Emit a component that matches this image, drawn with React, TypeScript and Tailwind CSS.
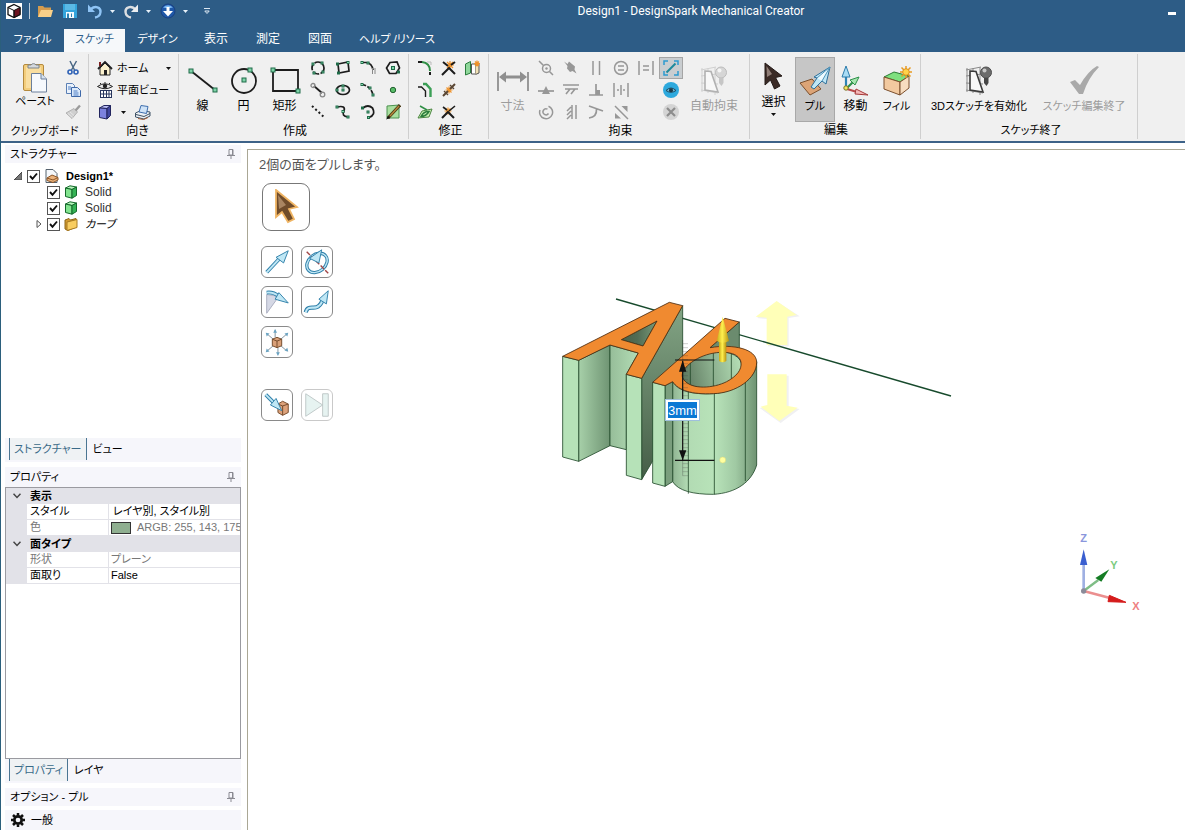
import React from "react";

type Kids = { children?: React.ReactNode };

const D = "#1c1c1c";

function Svg({ s = 16, vb, h, children }: Kids & { s?: number; vb?: string; h?: number }) {
  return (
    <svg aria-hidden="true" width={s} height={h ?? s} viewBox={vb ?? `0 0 ${s} ${h ?? s}`} fill="none" className="block shrink-0">
      {children}
    </svg>
  );
}

function Node({ x, y, r = 1.5 }: { x: number; y: number; r?: number }) {
  return <rect x={x - r} y={y - r} width={r * 2} height={r * 2} fill="#7fd3a8" stroke="#1f6b48" strokeWidth="1" />;
}

function Caret({ light = false }: { light?: boolean }) {
  return (
    <Svg s={5} h={3}>
      <path d="M0 0h5L2.500 3z" fill={light ? "#e8f2fa" : "#111"} />
    </Svg>
  );
}

/* ---------- title bar icons ---------- */
const AppLogo = () => (
  <Svg s={16}>
    <rect width="16" height="16" fill="#fff" />
    <path d="M8 1.500L14 4.500V11.500L8 14.500L2 11.500V4.500Z" fill="#fff" stroke="#111" strokeWidth="1.300" />
    <path d="M8 7.500L14 4.500V11.500L8 14.500Z" fill="#6d1320" stroke="#111" />
    <path d="M2 4.500L8 7.500V14.500" stroke="#111" />
  </Svg>
);
const OpenIcon = () => (
  <Svg s={16}>
    <path d="M1 14V3h5l1.500 1.500H14V14Z" fill="#d49b4e" />
    <path d="M1 14L4 7h12l-2 7Z" fill="#f9d089" />
  </Svg>
);
const SaveIcon = () => (
  <Svg s={16}>
    <path d="M1 1h14v14H1Z" fill="#34a4dc" />
    <path d="M3 1h10v6H3Z" fill="#5bb9e6" />
    <path d="M4 9h8v6H4Z" fill="#f4fbff" />
    <path d="M5 10.500h2V15H5ZM9 10.500h1V14H9Z" fill="#2c83b5" />
  </Svg>
);
const UndoIcon = () => (
  <Svg s={16}>
    <path d="M4 6C8 2.500 14 4 13.500 9C13.200 12 11 14 8 14.500" stroke="#8fc4f5" strokeWidth="2.400" />
    <path d="M1 1.500V9h7Z" fill="#8fc4f5" />
  </Svg>
);
const RedoIcon = () => (
  <Svg s={16}>
    <path d="M12 6C8 2.500 2 4 2.500 9C2.800 12 5 14 8 14.500" stroke="#dcdfe2" strokeWidth="2.400" />
    <path d="M15 1.500V9H8Z" fill="#eceef0" />
  </Svg>
);
const GlobeIcon = () => (
  <Svg s={16}>
    <circle cx="8" cy="8" r="7" fill="#1f58a8" stroke="#183f80" />
    <path d="M3 4.500Q8 0 13 4.500Q8 6 3 4.500" fill="#77b5f0" />
    <path d="M6.500 4h3v4H13L8 13.500L3 8H6.500Z" fill="#fff" />
  </Svg>
);

/* ---------- ribbon icons ---------- */
const PasteIcon = () => (
  <Svg s={32}>
    <rect x="4.500" y="3.500" width="20" height="26" rx="1.500" fill="#f3cd7c" stroke="#b48a3e" />
    <rect x="7" y="6" width="15" height="21" fill="#f9dea0" />
    <path d="M9 7V4h3a3 3 0 0 1 5 0h3v3Z" fill="#d5d9dd" stroke="#7c848b" />
    <path d="M12.500 12.500H22l5.500 5.500V31H12.500Z" fill="#f6f9fd" stroke="#6b7f9b" />
    <path d="M22 12.500V18h5.500" fill="#d5e2f1" stroke="#6b7f9b" />
  </Svg>
);
const CutIcon = () => (
  <Svg s={16}>
    <path d="M5 1L9.500 10M11.500 1L6.500 10" stroke="#4a6785" strokeWidth="1.500" />
    <circle cx="5" cy="12" r="2" stroke="#2f62b6" strokeWidth="1.600" />
    <circle cx="11" cy="12" r="2" stroke="#2f62b6" strokeWidth="1.600" />
  </Svg>
);
const CopyIcon = () => (
  <Svg s={16}>
    <path d="M1.500 1.500h6l2 2v8h-8Z" fill="#eaf2fc" stroke="#5a7fb4" />
    <path d="M6.500 5.500h6l3 3v6h-9Z" fill="#dceafb" stroke="#3e68a8" />
    <path d="M3 5h3M3 7h3M8.500 9h4M8.500 11h5M8.500 13h5" stroke="#4f7fc4" />
  </Svg>
);
const BrushIcon = () => (
  <Svg s={16}>
    <path d="M9 4.500L12.500 8L7 14.500L1 9Z" fill="#cfcfcf" stroke="#b2b2b2" />
    <path d="M3 9.500L7.500 13.500M5 8L9 11.500" stroke="#e6e6e6" />
    <path d="M10.500 6.500L15 1.500" stroke="#9b9b9b" strokeWidth="2.400" />
  </Svg>
);
const HomeIcon = () => (
  <Svg s={16}>
    <path d="M3 8L8 3l5 5v7H3Z" fill="#fdf3cf" stroke="#222" />
    <path d="M1 9L8 2l7 7" stroke="#222" strokeWidth="1.800" />
    <path d="M3 2v4" stroke="#7b1f1f" strokeWidth="2" />
    <path d="M7 10h3v5H7Z" fill="#222" />
  </Svg>
);
const PlanIcon = () => (
  <Svg s={16}>
    <path d="M.5 4.500Q8-1 15.500 4.500Q8 9 .5 4.500Z" fill="#e8e8e8" stroke="#222" />
    <circle cx="8" cy="4" r="2.200" fill="#222" />
    <path d="M3 1L4 2M8 0v1M13 1L12 2" stroke="#222" />
    <rect x="3.500" y="8.500" width="11" height="7" fill="#fff" stroke="#27345c" />
    <path d="M6.500 8.500v7M9.500 8.500v7M12 8.500v7M3.500 12h11" stroke="#27345c" />
  </Svg>
);
const BlueCube = () => (
  <Svg s={16}>
    <path d="M2.500 4L7 1.500H13.500L10 4.500Z" fill="#b9bdf5" stroke="#22255e" />
    <path d="M2.500 4L10 4.500V15L2.500 13.500Z" fill="#7c82de" stroke="#22255e" />
    <path d="M10 4.500L13.500 1.500V11.500L10 15Z" fill="#40469f" stroke="#22255e" />
  </Svg>
);
const PrintIcon = () => (
  <Svg s={18} h={16}>
    <path d="M1.500 9L7 6.500L16 8V12L10 15L1.500 13Z" fill="#eef1f4" stroke="#3f5366" />
    <path d="M5 8L7 1.500L14 2.500L12.500 9.500Z" fill="#cfe3f7" stroke="#3f6fae" />
    <path d="M2 10.500L10 12.500L16 9.500" stroke="#3f5366" />
    <path d="M4 14.500L9.500 15.500L14 13.500" stroke="#a05c35" />
  </Svg>
);
const LineIcon = () => (
  <Svg s={32}>
    <path d="M4 5H4L28 24" stroke={D} strokeWidth="1.800" />
    <Node x={4} y={5} r={2} />
    <Node x={28} y={24} r={2} />
  </Svg>
);
const CircleIcon = () => (
  <Svg s={32}>
    <circle cx="16" cy="15" r="12" stroke={D} strokeWidth="1.800" />
    <Node x={16} y={14} r={2} />
    <Node x={22} y={4} r={2} />
  </Svg>
);
const RectIcon = () => (
  <Svg s={32}>
    <path d="M4 4H29V25H4Z" stroke={D} strokeWidth="1.800" />
    <Node x={4} y={4} r={2} />
    <Node x={29} y={25} r={2} />
  </Svg>
);

const createIcons: [string, React.ReactNode][] = [
  ["3点円", <><circle cx="8" cy="8" r="6" stroke={D} strokeWidth="1.700" strokeDasharray="6.500 1.500" /><Node x={3} y={4} r={1} /><Node x={12} y={3} r={1} /><Node x={4} y={13} r={1} /><Node x={13} y={12} r={1} /></>],
  ["3点矩形", <><path d="M3 4L13 2L14 11L4 13Z" stroke={D} strokeWidth="1.700" /><Node x={2.500} y={4} r={1} /><Node x={13} y={2.500} r={1} /><Node x={3.500} y={13} r={1} /></>],
  ["接円弧", <><path d="M2 2.500H6Q12 3 13 10" stroke={D} strokeWidth="1.700" /><path d="M12.500 8v6M15 8v6" stroke="#888" /><Node x={2} y={2.500} r={1} /><Node x={8} y={3} r={1} /></>],
  ["多角形", <><path d="M5 2.500L12 2L14.500 8L11 13.500H4.500L1.500 8Z" stroke={D} strokeWidth="1.700" /><Node x={8} y={8} /><Node x={13.500} y={12} r={1} /></>],
  ["接線", <><path d="M4 4L12 11" stroke={D} strokeWidth="1.800" /><circle cx="3" cy="3.500" r="2" stroke="#888" strokeWidth="1.300" /><circle cx="12.500" cy="12.500" r="2.300" stroke="#888" strokeWidth="1.300" /></>],
  ["楕円", <><ellipse cx="8" cy="8" rx="6.500" ry="4.500" stroke={D} strokeWidth="1.700" /><Node x={8} y={8} r={1} /><Node x={8} y={4} r={1} /><Node x={2} y={8} r={1} /></>],
  ["掃引円弧", <><path d="M2 2.500Q11 4 13 13" stroke={D} strokeWidth="1.700" strokeDasharray="4 1.500" /><Node x={2} y={2.500} r={1} /><Node x={10} y={6} r={1} /><Node x={13} y={13} r={1} /></>],
  ["点", <circle cx="8" cy="8" r="2.700" fill="#58bc68" stroke="#22612f" />],
  ["構築線", <path d="M2 2L15 14" stroke={D} strokeWidth="2" strokeDasharray="2 2.500" />],
  ["スプライン", <><path d="M2 3Q11 1 9 7Q6 12 13 13" stroke={D} strokeWidth="1.700" /><Node x={2} y={3} r={1} /><Node x={8} y={7.500} r={1} /><Node x={13} y={13} r={1} /></>],
  ["円弧", <><path d="M3 4Q8 0 12.500 4Q16 11 9 13.500" stroke={D} strokeWidth="1.700" /><Node x={2.500} y={4} r={1} /><Node x={8} y={8} r={1} /><Node x={8.500} y={13.500} r={1} /></>],
  ["面曲線", <><path d="M2 2L14 1V14H2Z" fill="#a9df9f" stroke="#4c9250" /><path d="M3 14L15 1" stroke="#4a3a18" strokeWidth="3" /><path d="M5 12L14 2" stroke="#b98a3c" strokeWidth="1.300" /><path d="M1 15.500L3 12L5 14Z" fill="#111" /></>],
];

const Spark = ({ x, y, r = 4 }: { x: number; y: number; r?: number }) => (
  <path d={`M${x - r} ${y}H${x + r}M${x} ${y - r}V${y + r}M${x - r + 1} ${y - r + 1}L${x + r - 1} ${y + r - 1}M${x - r + 1} ${y + r - 1}L${x + r - 1} ${y - r + 1}`} stroke="#f0932b" strokeWidth="1.200" />
);

const modifyIcons: [string, React.ReactNode][] = [
  ["丸み付け", <><path d="M5 2Q13 3 13 11" stroke="#2f8f45" strokeWidth="2" /><path d="M1 2h4M13 12v3" stroke={D} strokeWidth="2" /><path d="M10 2h4v3" stroke="#bbb" /></>],
  ["トリム", <><Spark x={9} y={5} r={4} /><path d="M1 15L8 8L14 14M14 2L10 5M2 2L7 6" stroke={D} strokeWidth="2" /></>],
  ["面に投影", <><path d="M.5 4L5.500 1.500V13L.5 15Z" fill="#8fd79b" stroke="#2c7d3d" /><path d="M6.500 4h4v10h-4Z" fill="#fff" stroke="#555" /><path d="M10.500 5L14 3v10l-3.500 1.500" fill="#f2e2b5" stroke="#555" /><Spark x={12} y={3.500} r={3} /></>],
  ["オフセット", <><path d="M6 2h3L13.500 7v8" stroke="#3c9f56" strokeWidth="2.400" /><path d="M1 5h3.500L8.500 9v6" stroke={D} strokeWidth="1.400" /></>],
  ["分割", <><Spark x={8} y={8} r={3.500} /><path d="M2 14L7 9M14 2L9 7" stroke="#5a4633" strokeWidth="2" /><path d="M3 9L7 13M9 3L13 7" stroke="#5a4633" strokeWidth="1.400" /></>],
  ["spacer", null],
  ["投影", <><path d="M1 14L5 7L15 5L12 13Z" fill="#c8efb1" stroke="#4d8744" /><path d="M4 12.500Q7 7 12 7.500Q9 12.500 4 12.500Z" stroke="#2c7d3d" strokeWidth="1.500" /><path d="M3 2L10 6" stroke="#2f8f45" strokeWidth="1.600" /></>],
  ["コーナー", <><Spark x={7} y={7} r={3.500} /><path d="M1 14L7 8L13 14" stroke={D} strokeWidth="2" /><path d="M14 2L8 7M2 3L6 6" stroke={D} strokeWidth="1.600" /></>],
];

const S = "#979797";
const constraintIcons: [string, React.ReactNode][] = [
  ["一致", <><circle cx="8.500" cy="8.500" r="4" stroke={S} strokeWidth="1.500" /><circle cx="8.500" cy="8.500" r="1.200" fill={S} /><path d="M1 1L5.500 5.500M11.500 11.500L15 15" stroke={S} strokeWidth="1.500" /></>],
  ["固定", <path d="M1 1.500L4.500 4L6 1.500L12 6.500L11.500 9.500L13.500 13.500L9.500 11L7 12L4 8.500L4.500 6Z" fill={S} />],
  ["平行", <path d="M5 1V15M11.500 1V15" stroke={S} strokeWidth="1.500" />],
  ["等しい半径", <><circle cx="8" cy="8" r="6.500" stroke={S} strokeWidth="1.500" /><path d="M5 6H11M5 10H11" stroke={S} strokeWidth="1.600" /></>],
  ["等しい距離", <path d="M1 1V15M15 1V15M5 6h6M5 10h6" stroke={S} strokeWidth="1.500" />],
  ["中点", <><path d="M0 9H16" stroke={S} strokeWidth="1.700" /><path d="M4 12L8 4L12 12Z" fill={S} /></>],
  ["水平", <path d="M0 3H16M2 7H15M3 12L7 7M8 12L12 7" stroke={S} strokeWidth="1.600" />],
  ["垂直", <><path d="M1 13H15M8 2V13" stroke={S} strokeWidth="1.700" /><path d="M8 8h4v5H8Z" fill={S} /></>],
  ["対称", <path d="M1 1V15M15 1V15M8 3V13M4 8h2M10 8h2" stroke={S} strokeWidth="1.500" />],
  ["同心", <path d="M10.500 2.200A6.500 6.500 0 1 1 2 6M10.500 9.500A3 3 0 1 1 9.500 5.200" stroke={S} strokeWidth="1.500" />],
  ["鉛直", <path d="M9 1V15M13 1V15M8 3L4 7M8 7L4 11M8 11L4 15" stroke={S} strokeWidth="1.500" />],
  ["接線拘束", <path d="M1 2L15 7M1 14Q9 13 8.500 5" stroke={S} strokeWidth="1.700" />],
  ["等長", <><path d="M2 2L15 15" stroke={S} strokeWidth="1.500" /><path d="M8.500 2h6v6ZM2 9v5.500h6Z" fill={S} /></>],
];

const DimensionIcon = () => (
  <Svg s={32}>
    <path d="M1 6V25M31 6V25" stroke="#8f8f8f" strokeWidth="1.800" />
    <path d="M6 11H26" stroke="#8f8f8f" strokeWidth="3" />
    <path d="M2 11L9 5.500V16.500ZM30 11L23 5.500V16.500Z" fill="#8f8f8f" />
  </Svg>
);
const BulbSketch = ({ dim = false }: { dim?: boolean }) => {
  const c = dim ? "#b1b1b1" : "#3a3a3a";
  return (
    <Svg s={32}>
      <path d="M3 4L18 1M3 10L19 8M3 17L20 18M3 24L20 27M4 2V26M10 2V27M17 1V29" stroke={dim ? "#d0d0d0" : "#8a8a8a"} />
      <path d="M7 5L13 5.500L20 26L7 24Z" fill="#f8f8f8" stroke={c} strokeWidth="1.600" />
      <circle cx="23" cy="6.500" r="5.500" fill={dim ? "#d6d6d6" : "#6c6c6c"} stroke={dim ? "#bcbcbc" : "#4f4f4f"} />
      <circle cx="21.500" cy="4.500" r="2" fill={dim ? "#f5f5f5" : "#c8c8c8"} />
      <path d="M21 12h4.500v5l-2 3l-2.500-3Z" fill={dim ? "#c6c6c6" : "#464646"} />
    </Svg>
  );
};
const SelectIcon = () => (
  <Svg s={32}>
    <path d="M7 1L24 14L17.500 15.500L22 24L16.500 27L12.500 18L7 23Z" fill="#3a2a25" stroke="#241a17" />
    <path d="M8.500 4L9 15L14 12Z" fill="#8f7d76" />
  </Svg>
);
const PullIcon = () => (
  <Svg s={32}>
    <path d="M1 17L13 13L22 23L11 29Z" fill="#dca477" stroke="#7b4f2d" />
    <path d="M12 21L18 12L15 11L31 1L27 18L23 15L15 23Z" fill="#bfe6f6" stroke="#2d6f9a" />
    <path d="M18 12L31 1L23 15" fill="#eefaff" stroke="#4e94bb" />
  </Svg>
);
const MoveIcon = () => (
  <Svg s={32}>
    <path d="M6 22V10" stroke="#2d83b5" strokeWidth="2.200" />
    <path d="M2 11L6 0L10 11Z" fill="#a9dcf5" stroke="#2d7cab" />
    <path d="M7 22L13 16" stroke="#2e9149" strokeWidth="2.200" />
    <path d="M10 14L19 11L15 19Z" fill="#a8e6b1" stroke="#2e9149" />
    <path d="M7 23L17 26" stroke="#b94a4a" strokeWidth="2.200" />
    <path d="M16 23L28 29L15 28Z" fill="#f4b7b7" stroke="#a53a3a" />
    <circle cx="6" cy="22" r="2.200" fill="#f5e75d" stroke="#77702a" />
  </Svg>
);
const FillIcon = () => (
  <Svg s={32}>
    <path d="M3 11L13 6L28 10L19 16Z" fill="#7ee07f" stroke="#2b7b35" />
    <path d="M3 11L19 16V29L3 23Z" fill="#f2c99f" stroke="#7b4f2d" />
    <path d="M19 16L28 10V22L19 29Z" fill="#f7ddc0" stroke="#7b4f2d" />
    <path d="M25 0V12M19 6H31M20.500 1.500L29.500 10.500M20.500 10.500L29.500 1.500" stroke="#e79a22" strokeWidth="1.500" />
    <circle cx="25" cy="6" r="3.300" fill="#ffd34a" stroke="#df8f1e" />
  </Svg>
);
const CheckIcon = () => (
  <Svg s={32}>
    <path d="M2 16L7 14L12 19Q20 5 29 0L31 1Q20 12 15 28H11Z" fill="#a9a9a9" />
  </Svg>
);

/* ---------- shared pieces ---------- */
function Group({ label, className, children }: Kids & { label: string; className: string }) {
  return (
    <section aria-label={label} className={`my-[2px] flex shrink-0 flex-col border-r border-[#cfcfcf] pt-[3px] ${className}`}>
      <div className="flex h-[66px]">{children}</div>
      <h2 className="text-center leading-[17px]">{label}</h2>
    </section>
  );
}

function Big({ icon, label, className = "w-[41px] text-[12px]", top = "pt-[9px]", dim = false, caret = false }: {
  icon: React.ReactNode; label: string; className?: string; top?: string; dim?: boolean; caret?: boolean;
}) {
  return (
    <button type="button" disabled={dim} className={`flex shrink-0 flex-col items-center whitespace-nowrap leading-4 ${top} ${dim ? "text-[#9c9c9c]" : ""} ${className}`}>
      {icon}
      <span>{label}</span>
      {caret && <span className="pt-[3px]"><Caret /></span>}
    </button>
  );
}

function IconGrid({ items, className }: { items: [string, React.ReactNode][]; className: string }) {
  return (
    <div className={`grid auto-rows-[22px] place-items-center ${className}`}>
      {items.map(([name, art]) =>
        art ? (
          <button key={name} type="button" aria-label={name}>
            <Svg>{art}</Svg>
          </button>
        ) : (
          <span key={name} />
        ),
      )}
    </div>
  );
}

const tabs: [string, string][] = [
  ["ファイル", "w-[63px] text-[11px]"],
  ["スケッチ", "w-[61px] text-[11px] bg-[#f6f8fa] text-[#2f608b]"],
  ["デザイン", "w-[65px] text-[11px]"],
  ["表示", "w-[52px] text-[12px]"],
  ["測定", "w-[52px] text-[12px]"],
  ["図面", "w-[52px] text-[12px]"],
  ["ヘルプ /リソース", "w-[102px] text-[11px]"],
];

function Ribbon() {
  return (
    <div className="flex h-[91px] border-b-2 border-[#3d6288] bg-[#f0f0f0]">
      <Group label="クリップボード" className="w-[88px] text-[11px]">
        <Big icon={<PasteIcon />} label="ペースト" className="w-[68px] text-[11px]" top="pt-[4px]" />
        <div className="flex w-2 flex-col items-center">
          <button type="button" aria-label="切り取り" className="grid h-[22px] place-items-center"><CutIcon /></button>
          <button type="button" aria-label="コピー" className="grid h-[22px] place-items-center"><CopyIcon /></button>
          <button type="button" aria-label="書式のコピー" className="grid h-[22px] place-items-center"><BrushIcon /></button>
        </div>
      </Group>
      <Group label="向き" className="w-[90px] pl-[8px] text-[12px]">
        <div className="grid grow auto-rows-[22px] items-center text-[11px]">
          <button type="button" className="flex items-center gap-1 pr-[7px]"><HomeIcon /><span className="grow text-left">ホーム</span><Caret /></button>
          <button type="button" className="flex items-center gap-1 whitespace-nowrap"><PlanIcon />平面ビュー</button>
          <div className="flex items-center gap-2">
            <button type="button" aria-label="表示方向" className="flex items-center gap-2"><BlueCube /><Caret /></button>
            <button type="button" aria-label="スナップ表示"><PrintIcon /></button>
          </div>
        </div>
      </Group>
      <Group label="作成" className="w-[230px] pl-[3px] text-[12px]">
        <Big icon={<LineIcon />} label="線" />
        <Big icon={<CircleIcon />} label="円" />
        <Big icon={<RectIcon />} label="矩形" />
        <IconGrid items={createIcons} className="w-[100px] grid-cols-4" />
      </Group>
      <Group label="修正" className="w-[80px] pl-[4px] text-[12px]">
        <IconGrid items={modifyIcons} className="w-[72px] grid-cols-3" />
      </Group>
      <Group label="拘束" className="w-[261px] pl-[3px] text-[12px]">
        <Big icon={<DimensionIcon />} label="寸法" dim />
        <div className="grid w-[125px] auto-rows-[22px] grid-cols-5 place-items-center">
          {constraintIcons.map(([name, art], i) => (
            <button key={name} type="button" disabled aria-label={name} className={i === 9 ? "col-start-1" : ""}>
              <Svg>{art}</Svg>
            </button>
          ))}
        </div>
        <div className="flex w-[25px] flex-col items-center">
          <button type="button" aria-label="拘束を表示" className="grid h-[22px] w-[24px] place-items-center border border-[#a5a5a5] bg-[#c9cdd0]">
            <Svg>
              <path d="M1 5V1h4M11 1h4v4M15 11v4h-4M5 15H1v-4" stroke="#2d9bd0" strokeWidth="1.500" />
              <path d="M3.500 12.500L12.500 3.500" stroke="#1e8a9c" strokeWidth="2" />
            </Svg>
          </button>
          <button type="button" aria-label="状態を表示" className="grid h-[22px] place-items-center">
            <Svg>
              <circle cx="8" cy="8" r="8" fill="#2ea9dd" />
              <path d="M3 8.500Q8 3.500 13 8.500Q8 12 3 8.500Z" fill="#6fb4cf" stroke="#1d4a60" />
              <circle cx="8" cy="8.300" r="2" fill="#1d3b4a" />
            </Svg>
          </button>
          <button type="button" disabled aria-label="拘束を削除" className="grid h-[22px] place-items-center">
            <Svg>
              <circle cx="8" cy="8" r="8" fill="#d4d4d4" />
              <path d="M4 4L12 12M12 4L4 12" stroke="#8c8c8c" strokeWidth="2.200" />
            </Svg>
          </button>
        </div>
        <Big icon={<BulbSketch dim />} label="自動拘束" dim className="w-[62px] text-[12px]" />
      </Group>
      <Group label="編集" className="w-[171px] pl-[2px] text-[12px]">
        <Big icon={<SelectIcon />} label="選択" className="w-[43px] text-[12px]" top="pt-[5px]" caret />
        <Big icon={<PullIcon />} label="プル" className="w-[40px] border border-[#a8a8a8] bg-[#c6c6c6] text-[11px]" top="pt-[8px]" />
        <Big icon={<MoveIcon />} label="移動" />
        <Big icon={<FillIcon />} label="フィル" className="w-[41px] text-[11px]" />
      </Group>
      <Group label="スケッチ終了" className="w-[217px] pl-[4px] text-[11px]">
        <Big icon={<BulbSketch />} label="3Dスケッチを有効化" className="w-[108px] text-[11px]" />
        <Big icon={<CheckIcon />} label="スケッチ編集終了" dim className="w-[102px] text-[11px]" />
      </Group>
    </div>
  );
}

function Check({ label }: { label: string }) {
  return (
    <span className="grid size-[13px] shrink-0 place-items-center">
      <input type="checkbox" defaultChecked aria-label={label} className="peer size-[13px] appearance-none border border-[#555] bg-white [grid-area:1/1]" />
      <svg aria-hidden="true" viewBox="0 0 9 9" className="pointer-events-none hidden size-[9px] [grid-area:1/1] peer-checked:block">
        <path d="M1 4L3.500 6.800L8 1.500" fill="none" stroke="#111" strokeWidth="1.900" />
      </svg>
    </span>
  );
}

const SolidIcon = () => (
  <Svg s={14}>
    <path d="M1.500 3L6 .8L12.500 2L8 4.500Z" fill="#b9f5bd" stroke="#14682b" />
    <path d="M1.500 3L8 4.500V13.200L1.500 11.500Z" fill="#82e48f" stroke="#14682b" />
    <path d="M8 4.500L12.500 2V10.500L8 13.200Z" fill="#35b355" stroke="#14682b" />
  </Svg>
);
const FolderIcon = () => (
  <Svg s={14}>
    <path d="M1 3L5 1.500L6.500 3L12 1.500V10L4 13.500L1 12Z" fill="#d19a2f" stroke="#8d661a" />
    <path d="M3 5L13 2.500V10.500L3 13.500Z" fill="#f8cd61" stroke="#a87a22" />
  </Svg>
);
const DocIcon = () => (
  <Svg s={14}>
    <path d="M1 .5h7l4 4V13.500H1Z" fill="#f5f8fb" stroke="#55626e" />
    <path d="M2 9L7 6L13 8.500V11L8 13.500L2 11.500Z" fill="#eab27b" stroke="#8a5528" />
    <path d="M2 9L8 11L13 8.500" stroke="#8a5528" />
  </Svg>
);

function PanelHead({ title, className }: { title: string; className: string }) {
  return (
    <div className={`flex shrink-0 items-center justify-between bg-[#f6f6fb] pr-[6px] pl-[5px] text-[11px] ${className}`}>
      <h2>{title}</h2>
      <button type="button" aria-label={`${title}を固定`}>
        <Svg s={8} h={10}>
          <path d="M2 .5H6V6H2ZM0 6.500H8M4 6.500V10M5.500 1V6" stroke="#8a8a92" />
        </Svg>
      </button>
    </div>
  );
}

function PanelTabs({ items }: { items: string[] }) {
  return (
    <div role="tablist" className="flex h-6 shrink-0 items-stretch bg-[#f6f6fb] pb-[2px] pl-[4px] text-[11px]">
      <button type="button" role="tab" aria-selected="true" className="border-x border-[#4a7592] bg-[#eff2f4] px-[4px] text-[#396a88]">{items[0]}</button>
      <button type="button" role="tab" aria-selected="false" className="px-[6px]">{items[1]}</button>
    </div>
  );
}

function Chevron() {
  return (
    <Svg s={8} h={6}>
      <path d="M.5 .8L4 4.500L7.500 .8" stroke="#444" strokeWidth="1.500" />
    </Svg>
  );
}

function SectionRow({ title }: { title: string }) {
  return (
    <tr className="h-4 bg-[#e2e2e8]">
      <td><div className="flex justify-center"><Chevron /></div></td>
      <th colSpan={2} scope="colgroup" className="pl-[3px] text-left font-bold">{title}</th>
    </tr>
  );
}

function PropRow({ name, dim = false, children }: Kids & { name: string; dim?: boolean }) {
  return (
    <tr className={`h-4 ${dim ? "text-[#777]" : ""}`}>
      <td className="bg-[#e2e2e8]" />
      <th scope="row" className="border-r border-b border-[#e2e2e8] pl-[3px] text-left font-normal">{name}</th>
      <td className="border-b border-[#e2e2e8] pl-[2px] whitespace-nowrap">{children}</td>
    </tr>
  );
}

function Sidebar() {
  return (
    <aside className="flex w-[240px] shrink-0 flex-col pt-[2px] pl-[4px]">
      <PanelHead title="ストラクチャー" className="h-[18px]" />
      <ul className="min-h-0 flex-1 basis-0 pt-[5px] pl-[9px] text-[12px]">
        <li className="flex h-4 items-center gap-[5px] font-bold">
          <Svg s={8}><path d="M8 0V8H0Z" fill="#777" stroke="#444" /></Svg>
          <Check label="Design1" />
          <span className="flex items-center gap-[7px]"><DocIcon /><span className="text-[11px]">Design1*</span></span>
        </li>
        <li className="flex h-4 items-center gap-[4px] pl-[33px] text-[#333]"><Check label="Solid 1" /><SolidIcon /><span className="pl-[3px]">Solid</span></li>
        <li className="flex h-4 items-center gap-[4px] pl-[33px] text-[#333]"><Check label="Solid 2" /><SolidIcon /><span className="pl-[3px]">Solid</span></li>
        <li className="flex h-4 items-center gap-[4px] pl-[21px]">
          <Svg s={8}><path d="M2 .5L6 4L2 7.500Z" stroke="#555" /></Svg>
          <Check label="カーブ" />
          <FolderIcon />
          <span className="pl-[3px] text-[11px] italic">カーブ</span>
        </li>
      </ul>
      <PanelTabs items={["ストラクチャー", "ビュー"]} />
      <PanelHead title="プロパティ" className="mt-[5px] h-5" />
      <div className="min-h-0 flex-1 basis-0 overflow-hidden border border-[#9a9aa0]">
        <table className="w-full table-fixed border-separate border-spacing-0 text-[11px] leading-[15px]">
          <colgroup><col className="w-[21px]" /><col className="w-[82px]" /><col /></colgroup>
          <tbody>
            <SectionRow title="表示" />
            <PropRow name="スタイル"><span className="pl-[2px]">レイヤ別, スタイル別</span></PropRow>
            <PropRow name="色" dim>
              <span className="flex items-center gap-[6px]">
                <span className="h-3 w-5 shrink-0 border border-[#333] bg-[#8faf90]" />
                ARGB: 255, 143, 175
              </span>
            </PropRow>
            <SectionRow title="面タイプ" />
            <PropRow name="形状" dim>プレーン</PropRow>
            <PropRow name="面取り">False</PropRow>
          </tbody>
        </table>
      </div>
      <PanelTabs items={["プロパティ", "レイヤ"]} />
      <PanelHead title="オプション - プル" className="mt-[5px] h-[18px]" />
      <div className="mt-[4px] flex h-5 shrink-0 items-center gap-[6px] bg-[#f6f6fb] pl-[6px] text-[11px]">
        <Svg s={14}>
          <circle cx="7" cy="7" r="3.700" stroke="#111" strokeWidth="2.700" />
          <path d="M7 0V2.500M7 11.500V14M0 7H2.500M11.500 7H14M2 2L4 4M10 10L12 12M2 12L4 10M10 4L12 2" stroke="#111" strokeWidth="2.500" />
        </Svg>
        一般
      </div>
    </aside>
  );
}

/* ---------- canvas ---------- */
const B = "#2e7fa9";
const L = "#bfe7f5";
const toolIcons: [string, React.ReactNode][] = [
  ["プル方向", <><path d="M5 27L19 12" stroke={B} strokeWidth="4" /><path d="M5 27L19 12" stroke={L} strokeWidth="2" /><path d="M15 11L28 4L23 17Z" fill={L} stroke={B} /></>],
  ["回転", <><ellipse cx="16" cy="17" rx="12" ry="9" transform="rotate(-40 16 17)" stroke={B} strokeWidth="3.500" /><ellipse cx="16" cy="17" rx="12" ry="9" transform="rotate(-40 16 17)" stroke={L} strokeWidth="1.500" /><path d="M5 5L28 28" stroke="#a04444" strokeWidth="1.500" strokeDasharray="5 2" /><path d="M8 12L21 3L18 17Z" fill={L} stroke={B} /></>],
  ["ドラフト", <><path d="M5 8L18 10L5 28Z" fill="#d5d8e5" stroke="#a9adbf" /><path d="M5 6Q12 5 18 10" stroke={B} strokeWidth="4" /><path d="M5 6Q12 5 18 10" stroke={L} strokeWidth="2" /><path d="M18 6L28 17L14 13Z" fill={L} stroke={B} /></>],
  ["スイープ", <><path d="M4 27C6 18 14 25 18 20Q21 18 22 13" stroke={B} strokeWidth="4.500" /><path d="M4 27C6 18 14 25 18 20Q21 18 22 13" stroke={L} strokeWidth="2.200" /><path d="M18 13L28 4L26 18Z" fill={L} stroke={B} /></>],
  ["本体スケール", <><path d="M5 7L27 26M27 7L5 26M14 3V11M17 29V22" stroke="#7d8f9c" strokeWidth="1" /><path d="M4 6l4 1-3 3ZM28 6l-4 1 3 3ZM4 27l1-4 3 3ZM28 26l-4-1 3-3ZM12 6l2-4 2 4ZM15 27l2 4 2-4Z" fill="#6aa3c2" /><path d="M11 13L16 11L21 13V20L16 22L11 20Z" fill="#d9a079" stroke="#714728" /><path d="M11 13L16 15L21 13M16 15V22" stroke="#714728" /></>],
  ["指定まで", <><path d="M17 15L22 12L28 15V24L22 27L17 24Z" fill="#dda27b" stroke="#714728" /><path d="M17 15L22 17L28 15M22 17V27" stroke="#714728" /><path d="M4 5L13 14" stroke={B} strokeWidth="4" /><path d="M4 5L13 14" stroke={L} strokeWidth="2" /><path d="M9 16L15 9L21 22Z" fill={L} stroke={B} /></>],
  ["次へ", <path d="M4 4V28L22 16ZM22 4H28V28H22Z" fill="#c9e6e2" stroke="#6f8383" />],
];

function Tool({ i, className = "" }: { i: number; className?: string }) {
  const [name, art] = toolIcons[i];
  return (
    <button type="button" aria-label={name} className={`grid size-8 place-items-center rounded-[6px] border border-[#8a8a8a] bg-white ${className}`}>
      <Svg s={30} vb="0 0 32 32">{art}</Svg>
    </button>
  );
}

const ticks = Array.from({ length: 34 }, (_, i) => 176 + i * 12);

function Model() {
  return (
    <div className="absolute top-[135px] left-[302px]">
      <svg role="img" aria-label="3Dモデル" width="410" height="220" viewBox="0 0 1230 660" fill="none" className="block">
        <defs>
          <linearGradient id="wall"><stop offset="0" stopColor="#a7d0a9" /><stop offset="1" stopColor="#6f9473" /></linearGradient>
          <linearGradient id="back"><stop offset="0" stopColor="#96bd99" /><stop offset="1" stopColor="#b3ddb5" /></linearGradient>
          <linearGradient id="deep" x1="0" x2="1"><stop offset="0" stopColor="#486149" /><stop offset=".45" stopColor="#526c54" /><stop offset="1" stopColor="#789b7a" /></linearGradient>
          <linearGradient id="deep2" x1="0" y1="0" x2="0" y2="1"><stop offset="0" stopColor="#83a585" /><stop offset="1" stopColor="#455d47" /></linearGradient>
          <linearGradient id="tube"><stop offset="0" stopColor="#90b593" /><stop offset=".18" stopColor="#b2dbb3" /><stop offset=".5" stopColor="#b8e3b9" /><stop offset=".75" stopColor="#a0c9a3" /><stop offset="1" stopColor="#6f9372" /></linearGradient>
          <linearGradient id="hole"><stop offset="0" stopColor="#5c775e" /><stop offset=".5" stopColor="#8bae8d" /><stop offset="1" stopColor="#b5dfb6" /></linearGradient>
          <linearGradient id="gold"><stop offset="0" stopColor="#c7a817" /><stop offset=".45" stopColor="#fff04f" /><stop offset="1" stopColor="#b8920f" /></linearGradient>
        </defs>
        <g fill="#f0f0f2">
          <path d="M684 52L749 94L716 99V184H654V102L621 99Z" />
          <path d="M656 272H716V366L749 372L692 414L629 369L656 364Z" />
        </g>
        <g fill="#ffffb8">
          <path d="M680 48L740 90L712 95V180H650V98L617 95Z" />
          <path d="M652 268H710V362L743 368L688 408L632 365L652 360Z" />
        </g>
        <path d="M198 42L1203 333" stroke="#174a2c" strokeWidth="4" />
        <g stroke="#234a2b" strokeWidth="2.500" strokeLinejoin="round">
          <path d="M86 226L180 180V482L86 529Z" fill="url(#wall)" />
          <path d="M180 180L265 204L229 268V494L180 482Z" fill="url(#back)" />
          <path d="M38 214L86 226V529L38 516Z" fill="#b6e2b8" />
          <path d="M275 280L398 62V228L308 292V528L275 584Z" fill="url(#deep2)" />
          <path d="M229 268L275 280V584L229 571Z" fill="#b6e2b8" />
          <path d="M214 164L321 108L279 183Z" fill="url(#deep)" />
          <path d="M568 111V192L480 188Z" fill="#6b8b6e" />
          <path d="M368 290C385 320 430 329 490 326C560 320 620 280 620 230V540C605 590 560 624 490 628C430 628 385 618 368 590Z" fill="url(#tube)" />
          <path d="M345 302L368 290V590L345 604Z" fill="#7a9e7d" />
          <path d="M308 292L345 302V604L308 594Z" fill="#b6e2b8" />
          <path d="M415 318V626M493 324V628M586 284V588" />
          <ellipse cx="485" cy="254" rx="91" ry="52" transform="rotate(-12 485 254)" fill="url(#hole)" />
          <path d="M421 222V298M490 203V305M544 201V286" />
        </g>
        <g fill="#f08a30" stroke="#4a2c12" strokeWidth="2.500" strokeLinejoin="round" fillRule="evenodd">
          <path d="M38 214L358 52L398 62L275 280L229 268L265 204L180 180L86 226ZM214 164L279 183L321 108Z" />
          <path d="M308 292L525 100L568 111L480 188C550 176 620 192 620 232C620 280 560 324 490 326C425 329 385 316 368 290L345 302ZM573 232C568 196 500 194 450 217C410 236 385 266 402 285C425 315 490 310 530 290C560 274 576 254 573 232Z" />
        </g>
        <path d="M398 165V572" stroke="#333" strokeOpacity=".55" strokeWidth="1.500" />
        {ticks.map((y) => (
          <path key={y} d={`M398 ${y}H414`} stroke="#444" strokeOpacity=".4" strokeWidth="2" />
        ))}
        <path d="M375 225H493M375 526H493M398 228V524" stroke="#111" strokeWidth="3.500" />
        <path d="M398 226L409 260H387ZM398 526L409 496H387Z" fill="#111" />
        <path d="M507 165H529V228Q518 236 507 228Z" fill="url(#gold)" />
        <path d="M500 168L518 95L537 168Q518 178 500 168Z" fill="url(#gold)" />
        <circle cx="518" cy="525" r="9" fill="#ffffa0" stroke="#d8d878" strokeWidth="1.500" />
      </svg>
      <input
        aria-label="押し出し距離"
        defaultValue="3mm"
        className="absolute top-[114px] left-[115px] h-[22px] w-[35px] border border-[#9fc0dc] bg-[#0b78d4] px-px text-center font-['Liberation_Sans'] text-[13px] text-white shadow-[inset_0_0_0_2px_#fff] outline-none"
      />
    </div>
  );
}

function Triad() {
  return (
    <svg role="img" aria-label="座標軸" width="80" height="90" viewBox="0 0 240 270" className="absolute right-[35px] bottom-[210px]">
      <path d="M41 183V100" stroke="#9fb0e2" strokeWidth="8" />
      <path d="M30 105L41 58L52 105Z" fill="#3a5fd0" />
      <path d="M41 183L85 150" stroke="#7fbd86" strokeWidth="7" />
      <path d="M76 144L118 118L94 155Z" fill="#157c24" />
      <path d="M41 183L120 204" stroke="#eb8f8f" strokeWidth="8" />
      <path d="M118 196L168 217L114 215Z" fill="#d51c1c" stroke="#d51c1c" strokeWidth="3" />
      <circle cx="41" cy="183" r="8" fill="#8b8b99" />
      <g fontFamily="Liberation Sans" fontSize="33" fontWeight="bold">
        <text x="31" y="37" fill="#8a96dc">Z</text>
        <text x="121" y="117" fill="#7ccb7e">Y</text>
        <text x="187" y="240" fill="#ee8181">X</text>
      </g>
    </svg>
  );
}

function Viewport() {
  return (
    <main className="relative mt-[6px] ml-[6px] grow overflow-hidden border-t border-l border-[#aaa795] bg-white">
      <p className="pt-[6px] pl-[11px] text-[13px] leading-[18px] text-[#555]">2個の面をプルします。</p>
      <div className="flex flex-col items-start gap-2 pt-[9px] pl-[13px]">
        <button type="button" aria-label="選択ツール" className="mb-[7px] ml-px grid size-12 place-items-center rounded-[9px] border border-[#777] bg-white">
          <Svg s={32} h={36}>
            <path d="M6 1L27 18L19 20L24 30L18 33L12 23L6 28Z" fill="#6f4c2b" stroke="#efb463" strokeWidth="1.800" />
            <path d="M8 6L9 20L16 16Z" fill="#a98561" />
          </Svg>
        </button>
        <div className="flex gap-2"><Tool i={0} /><Tool i={1} /></div>
        <div className="flex gap-2"><Tool i={2} /><Tool i={3} /></div>
        <Tool i={4} />
        <div className="flex gap-2 pt-[23px]"><Tool i={5} /><Tool i={6} className="opacity-45" /></div>
      </div>
      <Model />
      <Triad />
    </main>
  );
}

export default function App() {
  return (
    <div className="flex min-h-screen flex-col overflow-hidden border-l border-[#2b5f7c] bg-white font-['Liberation_Sans','Noto_Sans_CJK_JP',sans-serif] text-black [font-feature-settings:'palt']">
      <header className="bg-[#2d5c86] text-white">
        <div className="relative flex h-[29px] items-start justify-center pt-[3px]">
          <div className="absolute top-[3px] left-[5px] flex items-center">
            <AppLogo />
            <span className="mx-[7px] h-4 w-px bg-white/70" />
            <button type="button" aria-label="開く"><OpenIcon /></button>
            <button type="button" aria-label="保存" className="ml-[9px]"><SaveIcon /></button>
            <button type="button" aria-label="元に戻す" className="ml-[9px] flex items-center gap-[7px]"><UndoIcon /><Caret light /></button>
            <button type="button" aria-label="やり直し" className="ml-[8px] flex items-center gap-[7px]"><RedoIcon /><Caret light /></button>
            <button type="button" aria-label="オンライン" className="ml-[9px] flex items-center gap-[7px]"><GlobeIcon /><Caret light /></button>
            <button type="button" aria-label="ツールバーの設定" className="ml-4">
              <Svg s={6} h={7}><path d="M0 .5h6M.8 3h4.400L3 5.500Z" stroke="#dbe7f2" /></Svg>
            </button>
          </div>
          <h1 className="pl-[196px] font-['Roboto'] text-[12px] leading-4">Design1 - DesignSpark Mechanical Creator</h1>
          <button type="button" aria-label="最小化" className="absolute top-[12px] right-[9px] h-[3px] w-2 bg-white" />
        </div>
        <nav className="flex h-[23px]">
          {tabs.map(([t, c]) => (
            <button key={t} type="button" className={`pb-[3px] whitespace-nowrap ${c}`}>{t}</button>
          ))}
        </nav>
      </header>
      <Ribbon />
      <div className="flex grow items-stretch">
        <Sidebar />
        <Viewport />
      </div>
    </div>
  );
}
